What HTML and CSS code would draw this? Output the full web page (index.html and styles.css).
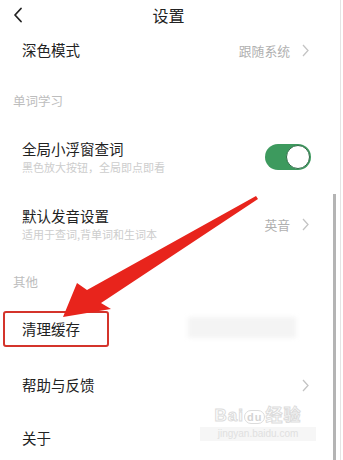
FILE: index.html
```html
<!DOCTYPE html>
<html>
<head lang="zh">
    <meta charset="UTF-8">
    <link rel="stylesheet" href="styles.css">
    <title>设置</title>
</head>
<body>
<div class="page">
    <div class="header">
        <svg class="back" width="10" height="16" viewBox="0 0 10 16">
            <path d="M8 1.5 L2 8 L8 14.5" fill="none" stroke="#222" stroke-width="1.8" stroke-linecap="round" stroke-linejoin="round"/>
        </svg>
        <span class="title">设置</span>
    </div>

    <div class="row row_dark">
        <span class="name">深色模式</span>
        <span class="value">跟随系统</span>
        <svg class="arrow" width="7" height="13" viewBox="0 0 7 13"><path d="M1 1 L6 6.5 L1 12" fill="none" stroke="#c4c4c4" stroke-width="1.3"/></svg>
    </div>

    <div class="section section_word">单词学习</div>

    <div class="row row_float">
        <div class="text">
            <span class="name">全局小浮窗查词</span>
            <span class="desc">黑色放大按钮，全局即点即看</span>
        </div>
        <div class="switch"><i class="knob"></i></div>
    </div>

    <div class="row row_voice">
        <div class="text">
            <span class="name">默认发音设置</span>
            <span class="desc">适用于查词,背单词和生词本</span>
        </div>
        <span class="value">英音</span>
        <svg class="arrow" width="7" height="13" viewBox="0 0 7 13"><path d="M1 1 L6 6.5 L1 12" fill="none" stroke="#c4c4c4" stroke-width="1.3"/></svg>
    </div>

    <div class="section section_other">其他</div>

    <div class="row row_cache">
        <span class="name">清理缓存</span>
    </div>

    <div class="row row_help">
        <span class="name">帮助与反馈</span>
        <svg class="arrow" width="7" height="13" viewBox="0 0 7 13"><path d="M1 1 L6 6.5 L1 12" fill="none" stroke="#c4c4c4" stroke-width="1.3"/></svg>
    </div>

    <div class="row row_about">
        <span class="name">关于</span>
    </div>

    <!-- overlays -->
    <div class="blur"></div>
    <div class="mark_box"></div>
    <svg class="mark_arrow" width="343" height="460" viewBox="0 0 343 460">
        <polygon points="63,317 77,283 87,290 256,196 258,199 101,303 111,309" fill="#e8241c"/>
    </svg>
    <div class="watermark">
        <div class="wm_logo">Bai<span class="wm_du">du</span>经验</div>
        <div class="wm_url">jingyan.baidu.com</div>
    </div>
    <div class="scroll"></div>
</div>
</body>
</html>
```

FILE: styles.css
```css
* {
    padding: 0;
    margin: 0;
}

body {
    background: #fff;
    font-family: "Noto Sans CJK SC", "Noto Sans", sans-serif;
    color: #222;
}

.page {
    position: relative;
    width: 340px;
    height: 460px;
    overflow: hidden;
    border-right: 1px solid #e4e4e4;
}

.header {
    height: 30px;
    display: flex;
    align-items: center;
    justify-content: center;
    position: relative;
}

.header .back {
    position: absolute;
    left: 13px;
    top: 7px;
}

.header .title {
    font-size: 16px;
    line-height: 20px;
    margin-left: -3px;
}

.row {
    display: flex;
    align-items: center;
    padding: 0 31px 0 22px;
}

.row .name {
    font-size: 14.5px;
    line-height: 20px;
    flex: 1;
}

.row .text {
    flex: 1;
    display: flex;
    flex-direction: column;
}

.row .desc {
    font-size: 11px;
    line-height: 16px;
    color: #cdcdcd;
}

.row .value {
    font-size: 12.8px;
    color: #b0b0b0;
    margin-right: 12px;
}

.row_dark { height: 40px; }
.row_float { height: 54px; }
.row_voice { height: 80px; }
.row_cache { height: 62px; }
.row_help { height: 50px; }
.row_about { height: 56px; }

.row_float {
    padding-right: 29px;
}

.section {
    display: flex;
    align-items: center;
    padding-left: 13px;
    font-size: 12.5px;
    color: #bdbdbd;
}

.section_word { height: 60px; }
.section_other { height: 34px; }

.switch {
    width: 46px;
    height: 26px;
    border-radius: 13px;
    background: #3d9a5e;
    display: flex;
    align-items: center;
    justify-content: flex-end;
    padding-right: 1px;
    box-sizing: border-box;
}

.switch .knob {
    width: 24px;
    height: 24px;
    border-radius: 50%;
    background: #fff;
    border: 1px solid #2f6b47;
    box-sizing: border-box;
}

.blur {
    position: absolute;
    left: 188px;
    top: 317px;
    width: 108px;
    height: 21px;
    background: #f4f4f4;
    filter: blur(2px);
}

.mark_box {
    position: absolute;
    left: 3px;
    top: 311px;
    width: 102px;
    height: 32px;
    border: 2px solid #d4342b;
    border-radius: 3px;
}

.mark_arrow {
    position: absolute;
    left: 0;
    top: 0;
}

.watermark {
    position: absolute;
    left: 200px;
    top: 406px;
    width: 116px;
    text-align: center;
    color: #fff;
}

.wm_logo {
    font-family: "Liberation Sans", "Noto Sans CJK SC", sans-serif;
    font-size: 17px;
    font-weight: bold;
    line-height: 20px;
    -webkit-text-stroke: 1px #dcdcdc;
    letter-spacing: 1px;
}

.wm_du {
    font-size: 11px;
    padding: 0 2px;
    border-radius: 8px;
    background: #fff;
    border: 1px solid #dcdcdc;
    color: #d4d4d4;
    -webkit-text-stroke: 0;
}

.wm_url {
    font-family: "Liberation Sans", sans-serif;
    font-size: 10px;
    line-height: 14px;
    color: #e0e0e0;
    background: #f6f6f6;
}

.scroll {
    position: absolute;
    left: 333px;
    top: 194px;
    width: 3px;
    height: 266px;
    background: #b4b4b4;
}
```
